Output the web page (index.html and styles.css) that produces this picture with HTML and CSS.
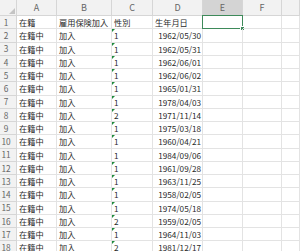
FILE: index.html
```html
<!DOCTYPE html>
<html lang="ja">
<head>
<meta charset="utf-8">
<link rel="stylesheet" href="styles.css">
</head>
<body>
<div class="sheet">
<div class="corner"><span class="tri"></span></div><div class="ch">A</div><div class="ch">B</div><div class="ch">C</div><div class="ch">D</div><div class="ch sel-ch">E</div><div class="ch">F</div><div class="ch"></div>
<div class="rh">1</div><div class="c">在籍</div><div class="c">雇用保険加入</div><div class="c">性別</div><div class="c">生年月日</div><div class="c sel"><span class="handle"></span></div><div class="c"></div><div class="c"></div>
<div class="rh">2</div><div class="c">在籍中</div><div class="c">加入</div><div class="c t">1</div><div class="c r">1962/05/30</div><div class="c"></div><div class="c"></div><div class="c"></div>
<div class="rh">3</div><div class="c">在籍中</div><div class="c">加入</div><div class="c t">1</div><div class="c r">1962/05/31</div><div class="c"></div><div class="c"></div><div class="c"></div>
<div class="rh">4</div><div class="c">在籍中</div><div class="c">加入</div><div class="c t">1</div><div class="c r">1962/06/01</div><div class="c"></div><div class="c"></div><div class="c"></div>
<div class="rh">5</div><div class="c">在籍中</div><div class="c">加入</div><div class="c t">1</div><div class="c r">1962/06/02</div><div class="c"></div><div class="c"></div><div class="c"></div>
<div class="rh">6</div><div class="c">在籍中</div><div class="c">加入</div><div class="c t">1</div><div class="c r">1965/01/31</div><div class="c"></div><div class="c"></div><div class="c"></div>
<div class="rh">7</div><div class="c">在籍中</div><div class="c">加入</div><div class="c t">1</div><div class="c r">1978/04/03</div><div class="c"></div><div class="c"></div><div class="c"></div>
<div class="rh">8</div><div class="c">在籍中</div><div class="c">加入</div><div class="c t">2</div><div class="c r">1971/11/14</div><div class="c"></div><div class="c"></div><div class="c"></div>
<div class="rh">9</div><div class="c">在籍中</div><div class="c">加入</div><div class="c t">1</div><div class="c r">1975/03/18</div><div class="c"></div><div class="c"></div><div class="c"></div>
<div class="rh">10</div><div class="c">在籍中</div><div class="c">加入</div><div class="c t">1</div><div class="c r">1960/04/21</div><div class="c"></div><div class="c"></div><div class="c"></div>
<div class="rh">11</div><div class="c">在籍中</div><div class="c">加入</div><div class="c">1</div><div class="c r">1984/09/06</div><div class="c"></div><div class="c"></div><div class="c"></div>
<div class="rh">12</div><div class="c">在籍中</div><div class="c">加入</div><div class="c t">1</div><div class="c r">1961/09/28</div><div class="c"></div><div class="c"></div><div class="c"></div>
<div class="rh">13</div><div class="c">在籍中</div><div class="c">加入</div><div class="c t">1</div><div class="c r">1963/11/25</div><div class="c"></div><div class="c"></div><div class="c"></div>
<div class="rh">14</div><div class="c">在籍中</div><div class="c">加入</div><div class="c t">1</div><div class="c r">1958/02/05</div><div class="c"></div><div class="c"></div><div class="c"></div>
<div class="rh">15</div><div class="c">在籍中</div><div class="c">加入</div><div class="c t">1</div><div class="c r">1974/05/18</div><div class="c"></div><div class="c"></div><div class="c"></div>
<div class="rh">16</div><div class="c">在籍中</div><div class="c">加入</div><div class="c t">2</div><div class="c r">1959/02/05</div><div class="c"></div><div class="c"></div><div class="c"></div>
<div class="rh">17</div><div class="c">在籍中</div><div class="c">加入</div><div class="c t">1</div><div class="c r">1964/11/03</div><div class="c"></div><div class="c"></div><div class="c"></div>
<div class="rh">18</div><div class="c">在籍中</div><div class="c">加入</div><div class="c t">2</div><div class="c r">1981/12/17</div><div class="c"></div><div class="c"></div><div class="c"></div>
</div>
</body>
</html>
```
FILE: styles.css
```css
* { box-sizing: border-box; }
html, body { margin: 0; padding: 0; background: #fff; overflow: hidden; }
body { font-family: "Noto Sans CJK JP", "Noto Sans", sans-serif; }
.sheet {
  display: grid;
  grid-template-columns: 17px 40px 55px 41px 50px 40px 39px 1fr;
  grid-template-rows: 16px repeat(18, 13.25px);
  width: 300px;
  height: 251px;
  overflow: hidden;
}
.corner, .ch, .rh {
  background: #f2f2f2;
  color: #666;
  border-right: 1px solid #d6d6d6;
  border-bottom: 1px solid #d6d6d6;
}
.corner { position: relative; }
.tri {
  position: absolute;
  right: 1px;
  bottom: 1px;
  width: 0;
  height: 0;
  border-left: 6px solid transparent;
  border-bottom: 6px solid #c4c4c4;
}
.ch {
  font-size: 9px;
  display: flex;
  align-items: center;
  justify-content: center;
  line-height: 1;
}
.sel-ch {
  background: #d4d4d4;
  border-bottom: 1px solid #3e8a5a;
}
.rh {
  font-size: 8.3px;
  display: flex;
  align-items: center;
  justify-content: center;
  padding-right: 4px;
  line-height: 1;
}
.c {
  border-right: 1px solid #e3e3e3;
  border-bottom: 1px solid #e3e3e3;
  font-size: 8.2px;
  color: #2a2a2a;
  line-height: 1;
  display: flex;
  align-items: center;
  padding: 0 2px;
  white-space: nowrap;
  overflow: hidden;
  position: relative;
}
.r { justify-content: flex-end; padding-right: 1px; }
.t::before {
  content: "";
  position: absolute;
  left: 0;
  top: 0;
  width: 0;
  height: 0;
  border-top: 3px solid #1e8a3c;
  border-right: 3px solid transparent;
}
.sel {
  overflow: visible;
  border: 1px solid #3e8a5a;
  margin: -1px 0 0 -1px;
}
.handle {
  position: absolute;
  right: -2px;
  bottom: -2px;
  width: 3px;
  height: 3px;
  background: #3e8a5a;
  border: 1px solid #fff;
  box-sizing: content-box;
  margin: -1px;
}
```
